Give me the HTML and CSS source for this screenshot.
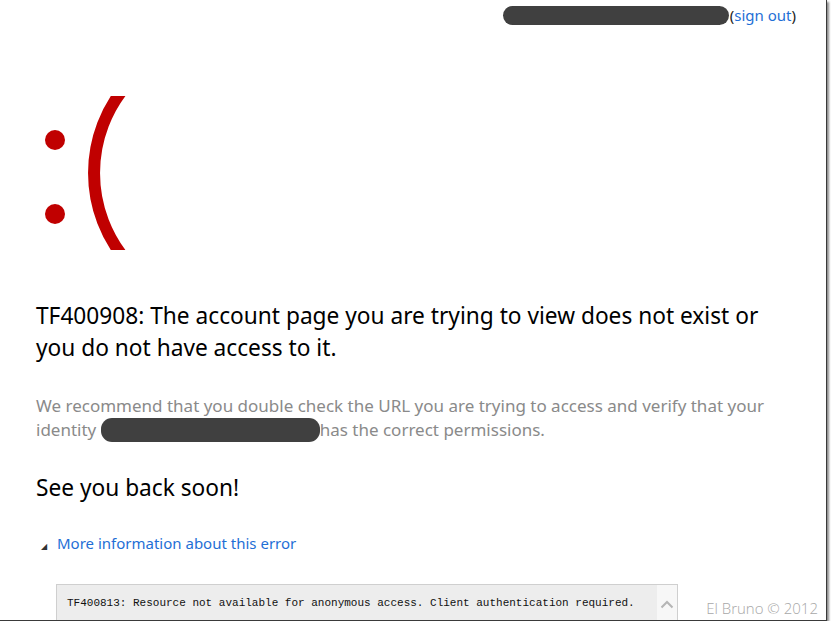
FILE: index.html
```html
<!DOCTYPE html>
<html lang="en">
<head>
<meta charset="utf-8">
<title>TF400908</title>
<link rel="stylesheet" href="styles.css">
</head>
<body>
<div class="window">
  <div class="topbar">
    <span class="redact redact-user"></span><span class="signout">(<a href="#">sign out</a>)</span>
  </div>
  <main class="content">
    <svg class="sad" width="110" height="166" viewBox="0 0 110 166" aria-hidden="true">
      <defs><clipPath id="pc"><rect x="0" y="6" width="110" height="154"/></clipPath></defs>
      <circle cx="19" cy="50" r="10" fill="#c00000"/>
      <circle cx="19" cy="124" r="10" fill="#c00000"/>
      <path d="M90.5,-5 A135.5,135.5 0 0 0 90.5,171" fill="none" stroke="#c00000" stroke-width="12" clip-path="url(#pc)"/>
    </svg>
    <h1 class="title">TF400908: The account page you are trying to view does not exist or<br>you do not have access to it.</h1>
    <p class="hint">We recommend that you double check the URL you are trying to access and verify that your<br>identity <span class="redact redact-id"></span>has the correct permissions.</p>
    <p class="bye">See you back soon!</p>
    <div class="more"><span class="tri">◢</span><a href="#">More information about this error</a></div>
    <div class="codebox">
      <div class="codetext">TF400813: Resource not available for anonymous access. Client authentication required.</div>
      <div class="scroll"><svg width="14" height="10" viewBox="0 0 14 10"><path d="M1.5,8.5 L7,3 L12.5,8.5" fill="none" stroke="#b5b5b5" stroke-width="2"/></svg></div>
    </div>
  </main>
  <div class="watermark">El Bruno © 2012</div>
</div>
</body>
</html>
```

FILE: styles.css
```css
html, body {
  margin: 0;
  padding: 0;
  background: #ffffff;
}
.window {
  position: relative;
  width: 826px;
  height: 620px;
  overflow: hidden;
  background: #ffffff;
  border-right: 1px solid #3a3a3a;
  border-bottom: 1px solid #3a3a3a;
  box-shadow: 2px 2px 2px rgba(0, 0, 0, 0.45);
  font-family: "Noto Sans", "Open Sans", sans-serif;
}
.topbar {
  display: flex;
  justify-content: flex-end;
  align-items: center;
  padding: 5px 30px 0 0;
  height: 20px;
  font-size: 15px;
  color: #222;
}
.signout a {
  color: #1f6fd6;
  text-decoration: none;
}
.redact {
  display: inline-block;
  background: #404040;
}
.redact-user {
  width: 226px;
  height: 19px;
  border-radius: 10px;
  margin-right: 1px;
}
.content {
  padding-left: 36px;
}
.sad {
  display: block;
  margin-top: 65px;
}
.title {
  margin: 44px 0 0;
  font-weight: normal;
  font-size: 22.7px;
  line-height: 32px;
  color: #000;
}
.hint {
  margin: 30px 0 0;
  font-size: 17px;
  line-height: 24px;
  color: #8a8a8a;
}
.redact-id {
  width: 219px;
  height: 24px;
  border-radius: 11px;
  vertical-align: -6px;
}
.bye {
  margin: 31px 0 0;
  font-size: 22.7px;
  line-height: 30px;
  color: #000;
}
.more {
  display: flex;
  align-items: baseline;
  margin-top: 29px;
  font-size: 15px;
  line-height: 22px;
}
.tri {
  font-size: 8px;
  color: #333;
  width: 21px;
  padding-left: 5px;
  box-sizing: border-box;
}
.more a {
  color: #1f6fd6;
  text-decoration: none;
}
.codebox {
  display: flex;
  margin: 27px 0 0 20px;
  width: 620px;
  height: 60px;
  border: 1px solid #cfcfcf;
  background: #ededed;
}
.codetext {
  flex: 1;
  padding: 11px 10px;
  font-family: "Liberation Mono", "DejaVu Sans Mono", monospace;
  font-size: 11px;
  line-height: 14px;
  color: #111;
}
.scroll {
  width: 20px;
  background: #f7f7f7;
  display: flex;
  justify-content: center;
  padding-top: 14px;
}
.scroll svg {
  display: block;
}
.watermark {
  position: absolute;
  right: 8px;
  bottom: 2px;
  font-size: 15px;
  color: #a8a8a8;
  font-family: "Open Sans", "Noto Sans", sans-serif;
  font-weight: 300;
}
```
